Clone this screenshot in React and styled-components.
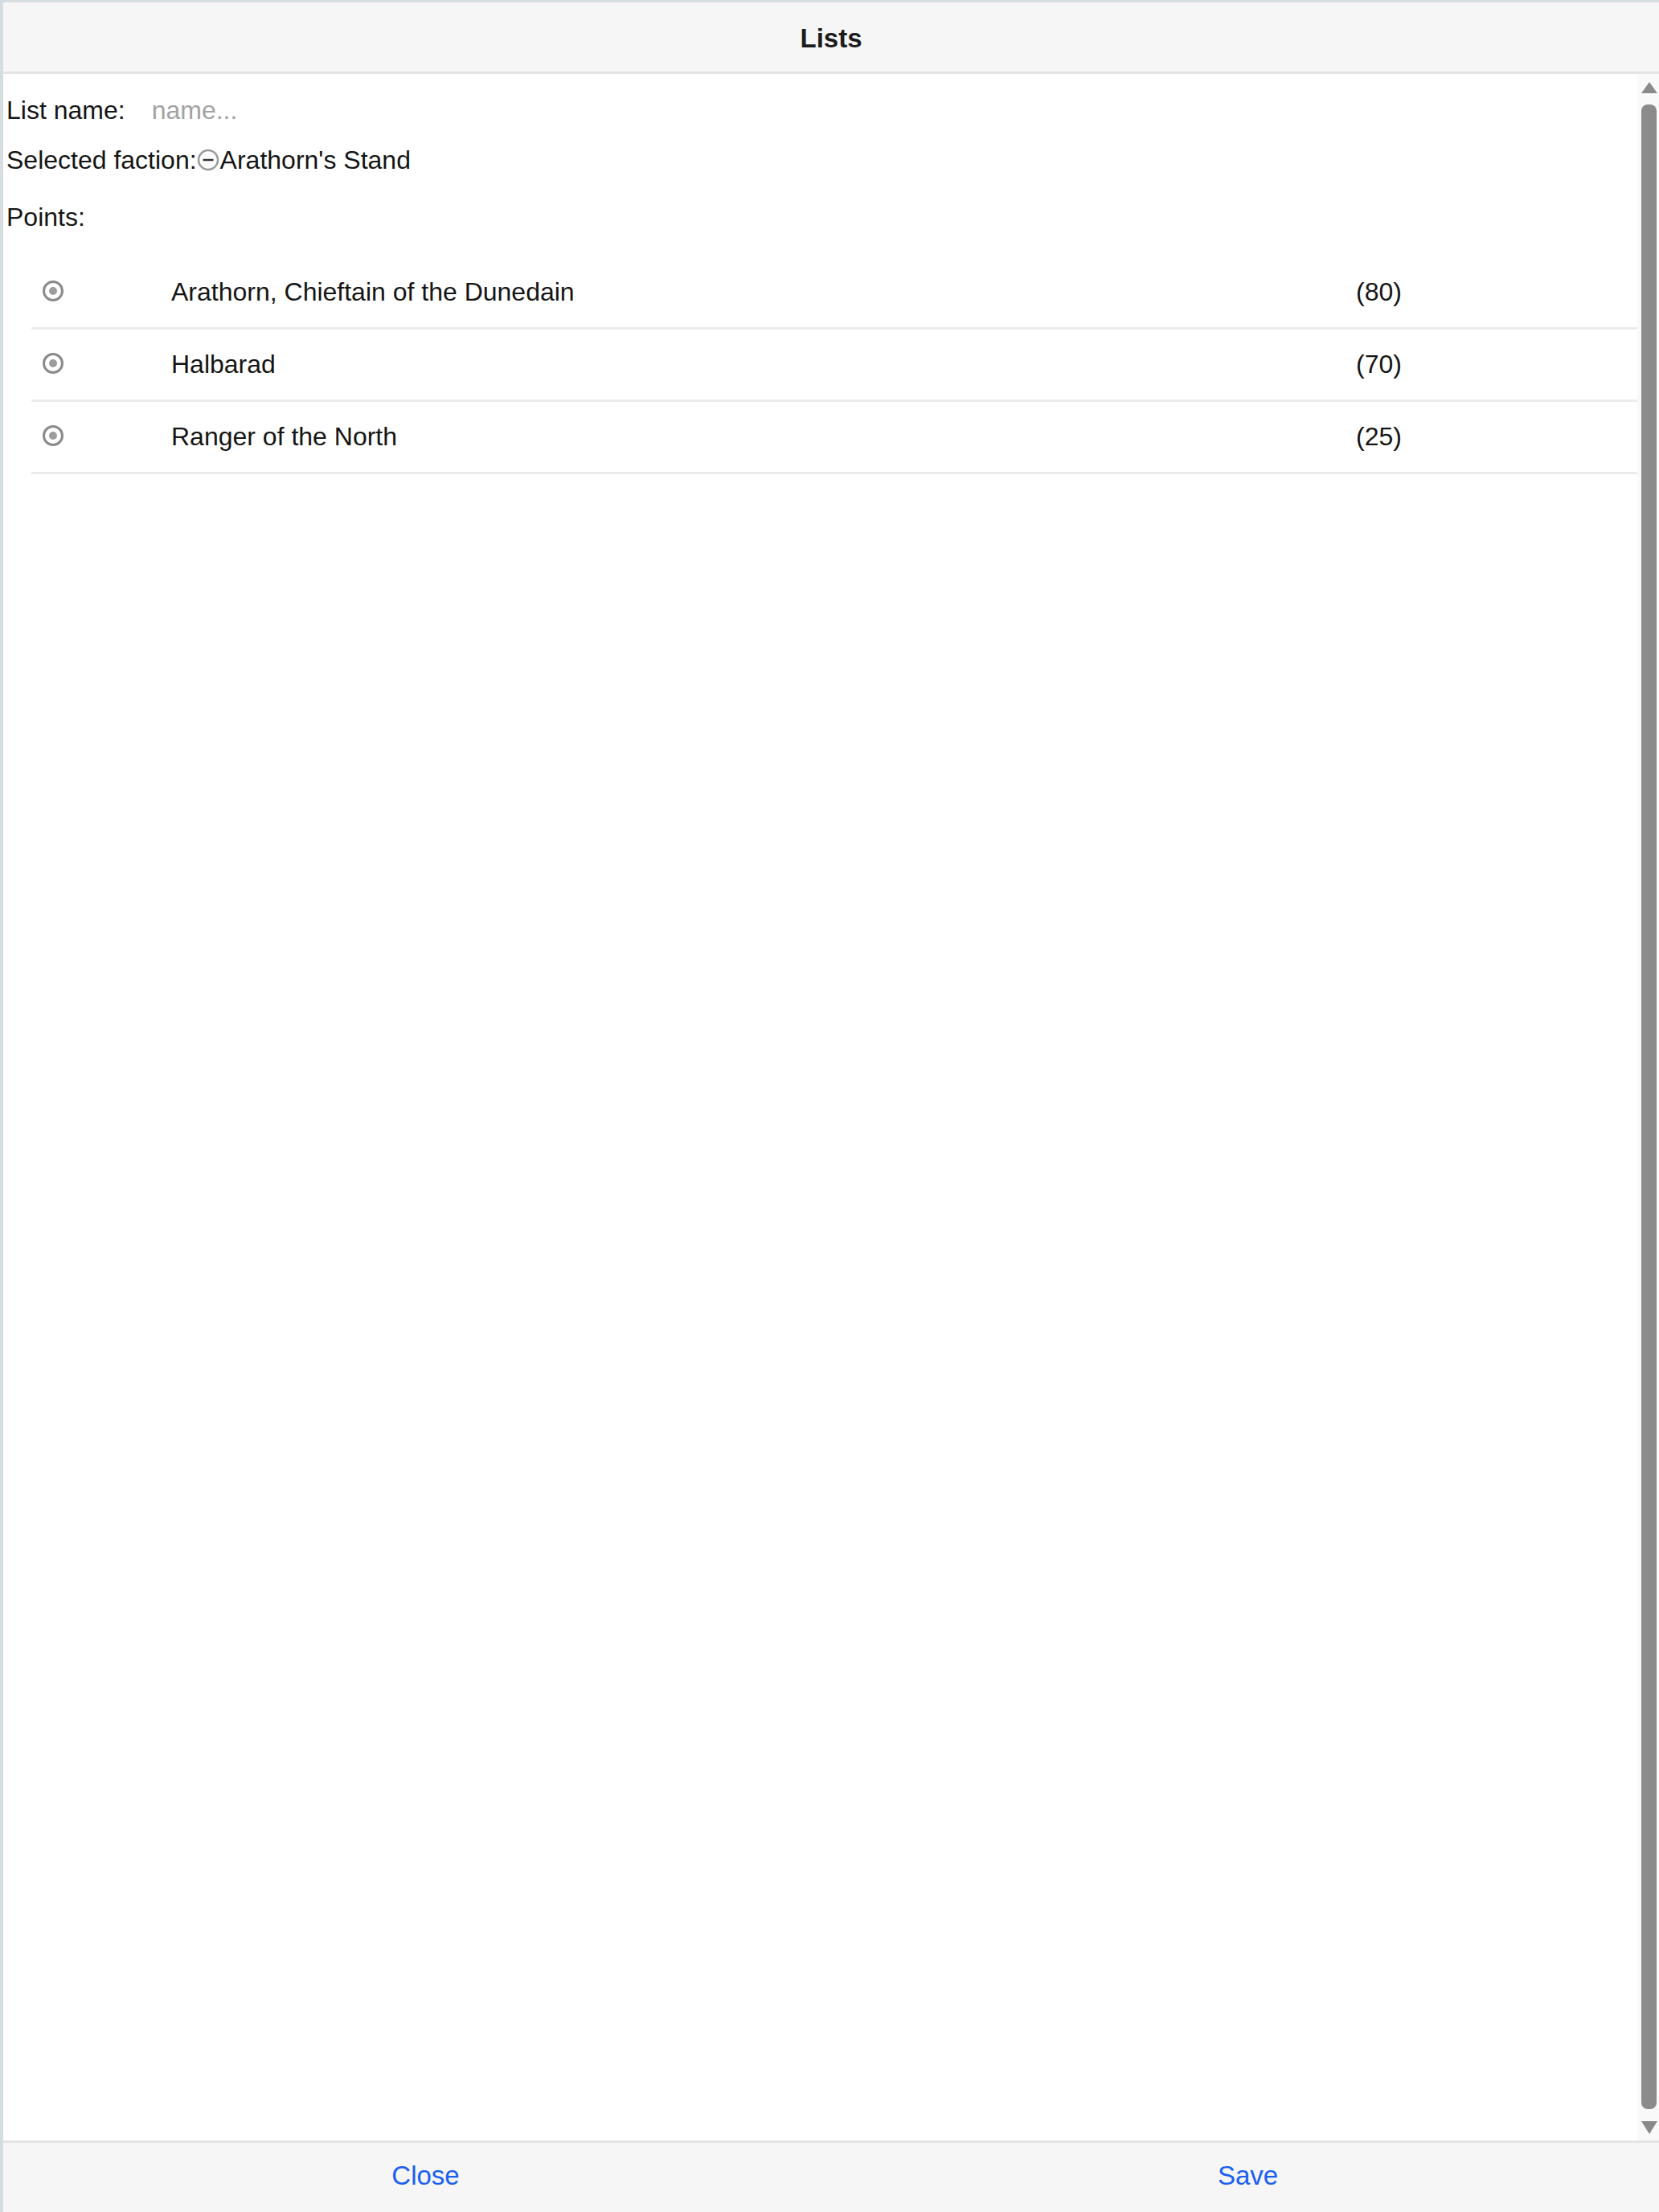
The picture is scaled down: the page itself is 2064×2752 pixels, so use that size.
import React from "react"
import styled, { createGlobalStyle } from "styled-components"

const GlobalStyle = createGlobalStyle`
  html, body {
    margin: 0;
    padding: 0;
    background: #ffffff;
  }
  * {
    box-sizing: border-box;
  }
`

const units = [
  { name: "Arathorn, Chieftain of the Dunedain", points: 80 },
  { name: "Halbarad", points: 70 },
  { name: "Ranger of the North", points: 25 },
]

function RadioIcon() {
  return (
    <svg width="28" height="28" viewBox="0 0 28 28">
      <circle cx="14" cy="14" r="11.5" fill="none" stroke="#8a8a8a" strokeWidth="3" />
      <circle cx="14" cy="14" r="5" fill="#9c9c9c" />
    </svg>
  )
}

function MinusCircleIcon() {
  return (
    <svg width="28" height="30" viewBox="0 0 28 30">
      <circle cx="14" cy="15" r="12" fill="none" stroke="#9a9a9a" strokeWidth="2.5" />
      <line x1="7.5" y1="15" x2="20.5" y2="15" stroke="#333" strokeWidth="2.5" />
    </svg>
  )
}

function App() {
  return (
    <>
      <GlobalStyle />
      <Frame>
        <Header>Lists</Header>
        <Body>
          <Content>
            <Field $after={22}>
              <Label>List name:</Label>
              <NameInput placeholder="name..." />
            </Field>
            <Field $after={31}>
              <Label>Selected faction:</Label>
              <FactionIcon>
                <MinusCircleIcon />
              </FactionIcon>
              <span>Arathorn's Stand</span>
            </Field>
            <Field $after={30}>
              <Label>Points:</Label>
            </Field>
            <UnitList>
              {units.map((u, i) => (
                <UnitRow key={i}>
                  <IconCell>
                    <RadioIcon />
                  </IconCell>
                  <NameCell>{u.name}</NameCell>
                  <PointsCell>({u.points})</PointsCell>
                </UnitRow>
              ))}
            </UnitList>
          </Content>
          <ScrollTrack>
            <ArrowUp />
            <Thumb />
            <ArrowDown />
          </ScrollTrack>
        </Body>
        <Footer>
          <FooterButton>Close</FooterButton>
          <FooterButton>Save</FooterButton>
        </Footer>
      </Frame>
    </>
  )
}

const Frame = styled.div`
  width: 2064px;
  height: 2752px;
  display: flex;
  flex-direction: column;
  border-top: 3px solid #d6dde1;
  border-left: 4px solid #d6dde1;
  font-family: "Liberation Sans", Arial, sans-serif;
  color: #151515;
  overflow: hidden;
`
const Header = styled.div`
  height: 89px;
  flex: none;
  display: flex;
  align-items: center;
  justify-content: center;
  background: #f6f6f6;
  border-bottom: 3px solid #e4e4e4;
  font-size: 33px;
  font-weight: bold;
  color: #1c1c1c;
  padding-top: 4px;
`
const Body = styled.div`
  flex: 1;
  display: flex;
  min-height: 0;
  background: #ffffff;
`
const Content = styled.div`
  flex: 1;
  padding: 25px 0 0 4px;
  font-size: 32px;
`
const Field = styled.div`
  display: flex;
  align-items: center;
  height: 40px;
  line-height: 40px;
  margin-bottom: ${props => props.$after}px;
  white-space: nowrap;
`
const Label = styled.span`
  color: #151515;
`
const NameInput = styled.input`
  margin-left: 33px;
  padding: 0;
  border: none;
  outline: none;
  background: transparent;
  font-family: "Liberation Sans", Arial, sans-serif;
  font-size: 32px;
  color: #151515;
  width: 400px;
  &::placeholder {
    color: #a2a2a2;
  }
`
const FactionIcon = styled.span`
  display: flex;
  align-items: center;
  margin: 0 1px 0 0;
`
const UnitList = styled.div`
  margin-left: 31px;
`
const UnitRow = styled.div`
  display: grid;
  grid-template-columns: 174px 1474px 1fr;
  align-items: center;
  height: 90px;
  border-bottom: 3px solid #ececec;
`
const IconCell = styled.div`
  display: flex;
  align-items: center;
  padding-left: 13px;
  margin-top: -4px;
`
const NameCell = styled.div`
  white-space: nowrap;
`
const PointsCell = styled.div`
  white-space: nowrap;
`
const ScrollTrack = styled.div`
  width: 27px;
  flex: none;
  display: flex;
  flex-direction: column;
  align-items: center;
  background: #f9f9f9;
  padding: 10px 0 8px 2px;
`
const ArrowUp = styled.div`
  width: 0;
  height: 0;
  border-left: 10px solid transparent;
  border-right: 10px solid transparent;
  border-bottom: 14px solid #8a8a8a;
`
const ArrowDown = styled.div`
  width: 0;
  height: 0;
  border-left: 10px solid transparent;
  border-right: 10px solid transparent;
  border-top: 16px solid #8a8a8a;
`
const Thumb = styled.div`
  flex: 1;
  width: 19px;
  margin: 14px 0 15px;
  background: #8b8b8b;
  border-radius: 8px;
`
const Footer = styled.div`
  height: 89px;
  flex: none;
  display: flex;
  background: #f6f6f6;
  border-top: 3px solid #e4e4e4;
  padding-left: 14px;
`
const FooterButton = styled.button`
  flex: 1;
  border: none;
  background: transparent;
  font-family: "Liberation Sans", Arial, sans-serif;
  font-size: 33px;
  color: #1a5ff0;
  padding: 0 0 4px;
  cursor: pointer;
`

export default App
